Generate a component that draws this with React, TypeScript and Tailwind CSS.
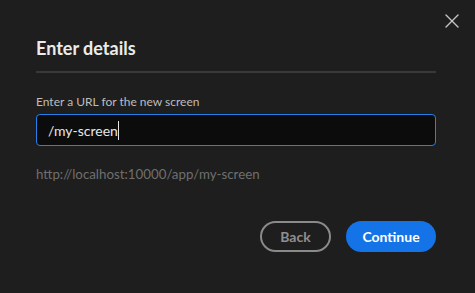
import { X } from 'lucide-react'

export default function App() {
  return (
    <div
      className="relative w-[475px] h-[293px] bg-[#1e1e1e] text-[#e3e3e3] overflow-hidden"
      style={{ fontFamily: '"Lato", "Open Sans", sans-serif' }}
    >
      <button
        className="absolute right-[11px] top-[9px] text-[#c4c4c4]"
        aria-label="Close"
      >
        <X size={24} strokeWidth={1.4} />
      </button>

      <div className="pl-[36px] pr-[39px] pt-[36px]">
        {/* Header */}
        <h2 className="text-[18px] leading-[24px] font-bold text-[#ebebeb]">
          Enter details
        </h2>
        <div className="mt-[11px] h-[2px] bg-[#393939]" />

        {/* URL field */}
        <label className="block mt-[21px] text-[12px] leading-[16px] text-[#bdbdbd]">
          Enter a URL for the new screen
        </label>
        <div className="mt-[4px] h-[32px] rounded-[4px] border border-[#2680eb] bg-[#0c0c0c] flex items-center pl-[11px]">
          <span className="text-[14px] text-[#e6e6e6]">/my-screen</span>
          <span className="w-px h-[19px] bg-[#e6e6e6]" />
        </div>
        <p className="mt-[19px] text-[13.3px] leading-[18px] text-[#6f6f6f]">
          http://localhost:10000/app/my-screen
        </p>

        {/* Actions */}
        <div className="mt-[38px] flex justify-end gap-[15px]">
          <button className="w-[71px] h-[31px] rounded-full border-2 border-[#8a8a8a] text-[14px] font-bold text-[#8f8f8f]">
            Back
          </button>
          <button className="w-[90px] h-[31px] rounded-full bg-[#1473e6] text-[14px] font-bold text-white">
            Continue
          </button>
        </div>
      </div>
    </div>
  )
}
